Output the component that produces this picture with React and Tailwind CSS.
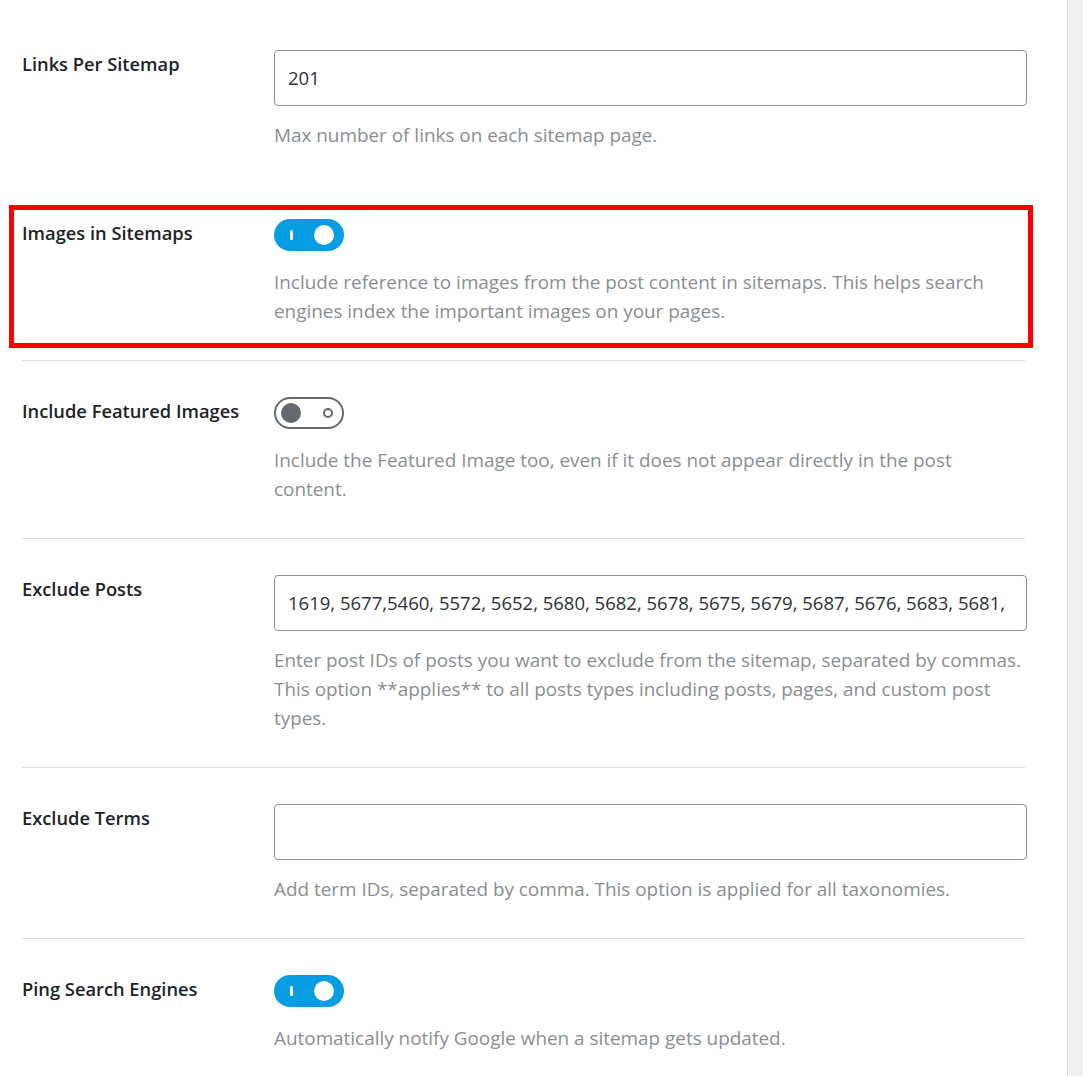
import React from "react";

const font = { fontFamily: '"Open Sans", "Noto Sans", sans-serif' };

function ToggleOn() {
  return (
    <div className="flex h-[32px] w-[70px] items-center justify-between rounded-full bg-[#069de3] pl-[16px] pr-[10px]">
      <span className="h-[10px] w-[3px] rounded-full bg-white" />
      <span className="h-[20px] w-[20px] rounded-full bg-white" />
    </div>
  );
}

function ToggleOff() {
  return (
    <div className="flex h-[32px] w-[70px] items-center justify-between rounded-full border-2 border-[#646970] bg-white pl-[5px] pr-[9px]">
      <span className="h-[20px] w-[20px] rounded-full bg-[#646970]" />
      <span className="h-[10px] w-[10px] rounded-full border-2 border-[#646970]" />
    </div>
  );
}

function TextInput({ value }) {
  return (
    <div className="flex h-[56px] w-[753px] items-center overflow-hidden whitespace-nowrap rounded-[4px] border border-[#8c8f94] bg-white px-[13px] text-[18.5px] text-[#2c3338]">
      {value}
    </div>
  );
}

function Row({ label, control, desc, border, toggle, highlight, first }) {
  return (
    <div className={"relative " + (border ? "border-t border-[#dcdcde]" : "")}>
      {highlight && (
        <div className="pointer-events-none absolute -left-[13px] -right-[8px] top-[22px] bottom-[12px] border-[5px] border-[#ff0000]" />
      )}
      <div className={"flex pt-[36px] " + (first ? "pb-[33px]" : "pb-[34px]")}>
        <div className="-mt-[1px] w-[252px] shrink-0 text-[18.3px] font-semibold leading-[29px] text-[#1d2327]">
          {label}
        </div>
        <div className="flex-1">
          {control}
          <p className={"max-w-[752px] text-[18.9px] leading-[29px] text-[#8a8e94] " + (toggle ? "mt-[17px]" : "mt-[15px]")}>
            {desc}
          </p>
        </div>
      </div>
    </div>
  );
}

export default function App() {
  return (
    <div className="flex min-h-screen bg-white" style={font}>
      <div className="flex-1 overflow-hidden">
        <div className="ml-[22px] w-[1003px] pt-[14px]">
          <Row
            first
            label="Links Per Sitemap"
            control={<TextInput value="201" />}
            desc="Max number of links on each sitemap page."
          />
          <Row
            highlight
            toggle
            label="Images in Sitemaps"
            control={<ToggleOn />}
            desc="Include reference to images from the post content in sitemaps. This helps search engines index the important images on your pages."
          />
          <Row
            border
            toggle
            label="Include Featured Images"
            control={<ToggleOff />}
            desc="Include the Featured Image too, even if it does not appear directly in the post content."
          />
          <Row
            border
            label="Exclude Posts"
            control={
              <TextInput value="1619, 5677,5460, 5572, 5652, 5680, 5682, 5678, 5675, 5679, 5687, 5676, 5683, 5681," />
            }
            desc="Enter post IDs of posts you want to exclude from the sitemap, separated by commas. This option **applies** to all posts types including posts, pages, and custom post types."
          />
          <Row
            border
            label="Exclude Terms"
            control={<TextInput value="" />}
            desc="Add term IDs, separated by comma. This option is applied for all taxonomies."
          />
          <Row
            border
            toggle
            label="Ping Search Engines"
            control={<ToggleOn />}
            desc="Automatically notify Google when a sitemap gets updated."
          />
        </div>
      </div>
      <div className="w-[16px] shrink-0 border-l border-[#dcdcde] bg-[#f0f0f1]" />
    </div>
  );
}
